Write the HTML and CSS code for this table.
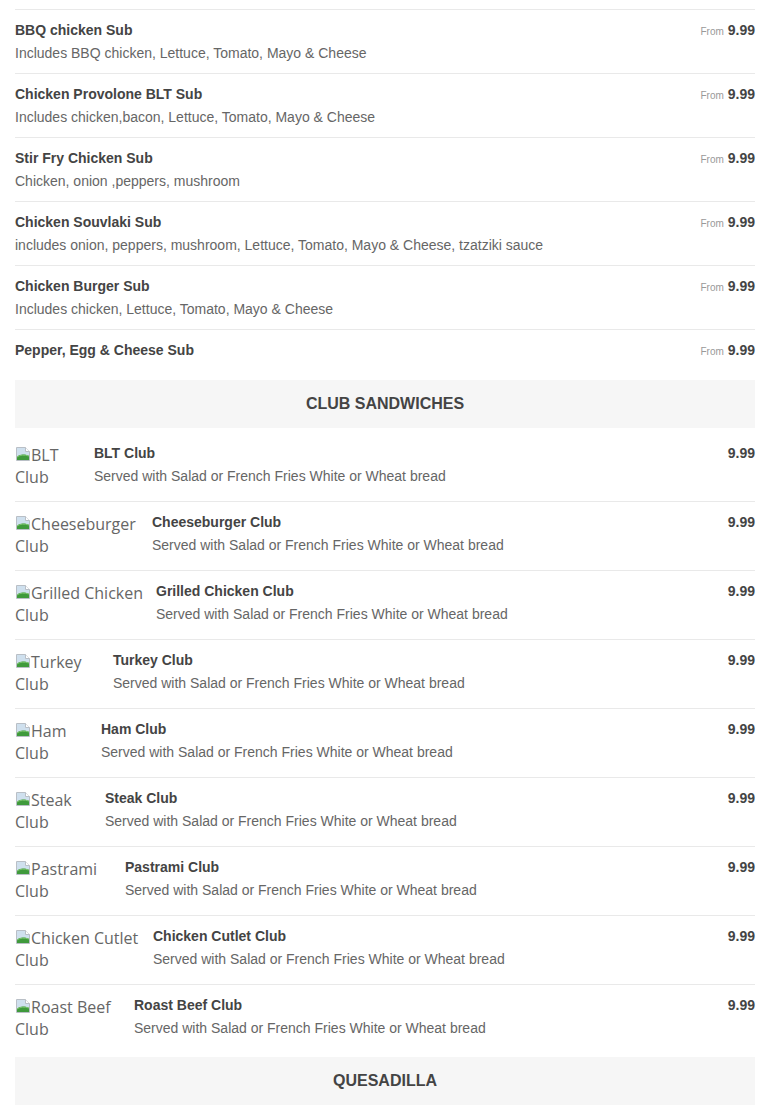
FILE: index.html
```html
<!DOCTYPE html>
<html>
<head>
<meta charset="utf-8">
<link rel="stylesheet" href="styles.css">
</head>
<body>
<svg width="0" height="0" class="defs">
  <defs>
    <symbol id="broken" viewBox="0 0 16 16">
      <path d="M1.5 1.5h9l4 4v9h-13z" fill="#f4f6f8" stroke="#b9bfc6"/>
      <path d="M2 2h8.3l3.7 3.7V10H2z" fill="#cfe0ee"/>
      <path d="M2 14V11c3-3 7-3 12-1v4z" fill="#3f9a3c"/>
      <path d="M2 11c3-2 7-2.5 12-1" fill="none" stroke="#7cc46e" stroke-width="1"/>
      <path d="M10.5 1.5v4h4" fill="#fff" stroke="#b9bfc6"/>
    </symbol>
  </defs>
</svg>
<div class="menu">
  <div class="sub-list">
    <div class="item">
      <div class="info"><div class="title">BBQ chicken Sub</div><div class="desc">Includes BBQ chicken, Lettuce, Tomato, Mayo &amp; Cheese</div></div>
      <div class="price"><span class="from">From</span> 9.99</div>
    </div>
    <div class="item">
      <div class="info"><div class="title">Chicken Provolone BLT Sub</div><div class="desc">Includes chicken,bacon, Lettuce, Tomato, Mayo &amp; Cheese</div></div>
      <div class="price"><span class="from">From</span> 9.99</div>
    </div>
    <div class="item">
      <div class="info"><div class="title">Stir Fry Chicken Sub</div><div class="desc">Chicken, onion ,peppers, mushroom</div></div>
      <div class="price"><span class="from">From</span> 9.99</div>
    </div>
    <div class="item">
      <div class="info"><div class="title">Chicken Souvlaki Sub</div><div class="desc">includes onion, peppers, mushroom, Lettuce, Tomato, Mayo &amp; Cheese, tzatziki sauce</div></div>
      <div class="price"><span class="from">From</span> 9.99</div>
    </div>
    <div class="item">
      <div class="info"><div class="title">Chicken Burger Sub</div><div class="desc">Includes chicken, Lettuce, Tomato, Mayo &amp; Cheese</div></div>
      <div class="price"><span class="from">From</span> 9.99</div>
    </div>
    <div class="item">
      <div class="info"><div class="title">Pepper, Egg &amp; Cheese Sub</div></div>
      <div class="price"><span class="from">From</span> 9.99</div>
    </div>
  </div>

  <h2 class="section-heading">CLUB SANDWICHES</h2>
  <div class="club-list">
    <div class="item club">
      <div class="pic w-blt"><svg class="icon"><use href="#broken"/></svg>BLT Club</div>
      <div class="info"><div class="title">BLT Club</div><div class="desc">Served with Salad or French Fries White or Wheat bread</div></div>
      <div class="price">9.99</div>
    </div>
    <div class="item club">
      <div class="pic w-cheese"><svg class="icon"><use href="#broken"/></svg>Cheeseburger Club</div>
      <div class="info"><div class="title">Cheeseburger Club</div><div class="desc">Served with Salad or French Fries White or Wheat bread</div></div>
      <div class="price">9.99</div>
    </div>
    <div class="item club">
      <div class="pic w-grilled"><svg class="icon"><use href="#broken"/></svg>Grilled Chicken Club</div>
      <div class="info"><div class="title">Grilled Chicken Club</div><div class="desc">Served with Salad or French Fries White or Wheat bread</div></div>
      <div class="price">9.99</div>
    </div>
    <div class="item club">
      <div class="pic w-turkey"><svg class="icon"><use href="#broken"/></svg>Turkey Club</div>
      <div class="info"><div class="title">Turkey Club</div><div class="desc">Served with Salad or French Fries White or Wheat bread</div></div>
      <div class="price">9.99</div>
    </div>
    <div class="item club">
      <div class="pic w-ham"><svg class="icon"><use href="#broken"/></svg>Ham Club</div>
      <div class="info"><div class="title">Ham Club</div><div class="desc">Served with Salad or French Fries White or Wheat bread</div></div>
      <div class="price">9.99</div>
    </div>
    <div class="item club">
      <div class="pic w-steak"><svg class="icon"><use href="#broken"/></svg>Steak Club</div>
      <div class="info"><div class="title">Steak Club</div><div class="desc">Served with Salad or French Fries White or Wheat bread</div></div>
      <div class="price">9.99</div>
    </div>
    <div class="item club">
      <div class="pic w-pastrami"><svg class="icon"><use href="#broken"/></svg>Pastrami Club</div>
      <div class="info"><div class="title">Pastrami Club</div><div class="desc">Served with Salad or French Fries White or Wheat bread</div></div>
      <div class="price">9.99</div>
    </div>
    <div class="item club">
      <div class="pic w-cutlet"><svg class="icon"><use href="#broken"/></svg>Chicken Cutlet Club</div>
      <div class="info"><div class="title">Chicken Cutlet Club</div><div class="desc">Served with Salad or French Fries White or Wheat bread</div></div>
      <div class="price">9.99</div>
    </div>
    <div class="item club">
      <div class="pic w-roast"><svg class="icon"><use href="#broken"/></svg>Roast Beef Club</div>
      <div class="info"><div class="title">Roast Beef Club</div><div class="desc">Served with Salad or French Fries White or Wheat bread</div></div>
      <div class="price">9.99</div>
    </div>
  </div>

  <h2 class="section-heading">QUESADILLA</h2>
  <div class="club-list">
    <div class="item club">
      <div class="pic w-roast"><svg class="icon"><use href="#broken"/></svg>Chicken Quesadilla</div>
      <div class="info"><div class="title">Chicken Quesadilla</div><div class="desc">Served with Salsa and Sour Cream</div></div>
      <div class="price">9.99</div>
    </div>
  </div>
</div>
</body>
</html>
```

FILE: styles.css
```css
* { box-sizing: border-box; }
html, body { margin: 0; padding: 0; background: #fff; }
body {
  font-family: "Liberation Sans", Arial, sans-serif;
  font-size: 14px;
  color: #444;
}
.defs { position: absolute; width: 0; height: 0; overflow: hidden; }
.menu { padding: 9px 15px 0; }

.item {
  display: flex;
  align-items: flex-start;
  border-top: 1px solid #e9e9e9;
  padding: 10px 0;
}
.info { flex: 1 1 auto; min-width: 0; }
.title { font-weight: bold; line-height: 20px; color: #444; }
.desc { margin-top: 3px; line-height: 20px; color: #666; }
.price {
  flex: none;
  font-weight: bold;
  line-height: 20px;
  color: #444;
  white-space: nowrap;
}
.from { font-size: 10px; font-weight: normal; color: #999; }

.sub-list { margin-bottom: 8px; }

.section-heading {
  margin: 4px 0 0;
  height: 48px;
  line-height: 48px;
  background: #f6f6f6;
  text-align: center;
  font-size: 16px;
  font-weight: bold;
  color: #444;
}

.club-list { margin-top: 5px; }
.club-list .item:first-child { border-top: none; }
.item.club { padding: 10px 0 13px; }
.pic {
  flex: none;
  margin-right: 15px;
  font-family: "Open Sans", "Liberation Sans", sans-serif;
  font-size: 16px;
  line-height: 22px;
  color: #666;
  padding-top: 1px;
}
.icon { width: 16px; height: 16px; vertical-align: -1px; }

.w-blt { width: 64px; }
.w-cheese { width: 122px; }
.w-grilled { width: 128px; margin-right: 13px; }
.w-turkey { width: 83px; }
.w-ham { width: 71px; }
.w-steak { width: 75px; }
.w-pastrami { width: 95px; }
.w-cutlet { width: 124px; margin-right: 14px; }
.w-roast { width: 104px; }
```
